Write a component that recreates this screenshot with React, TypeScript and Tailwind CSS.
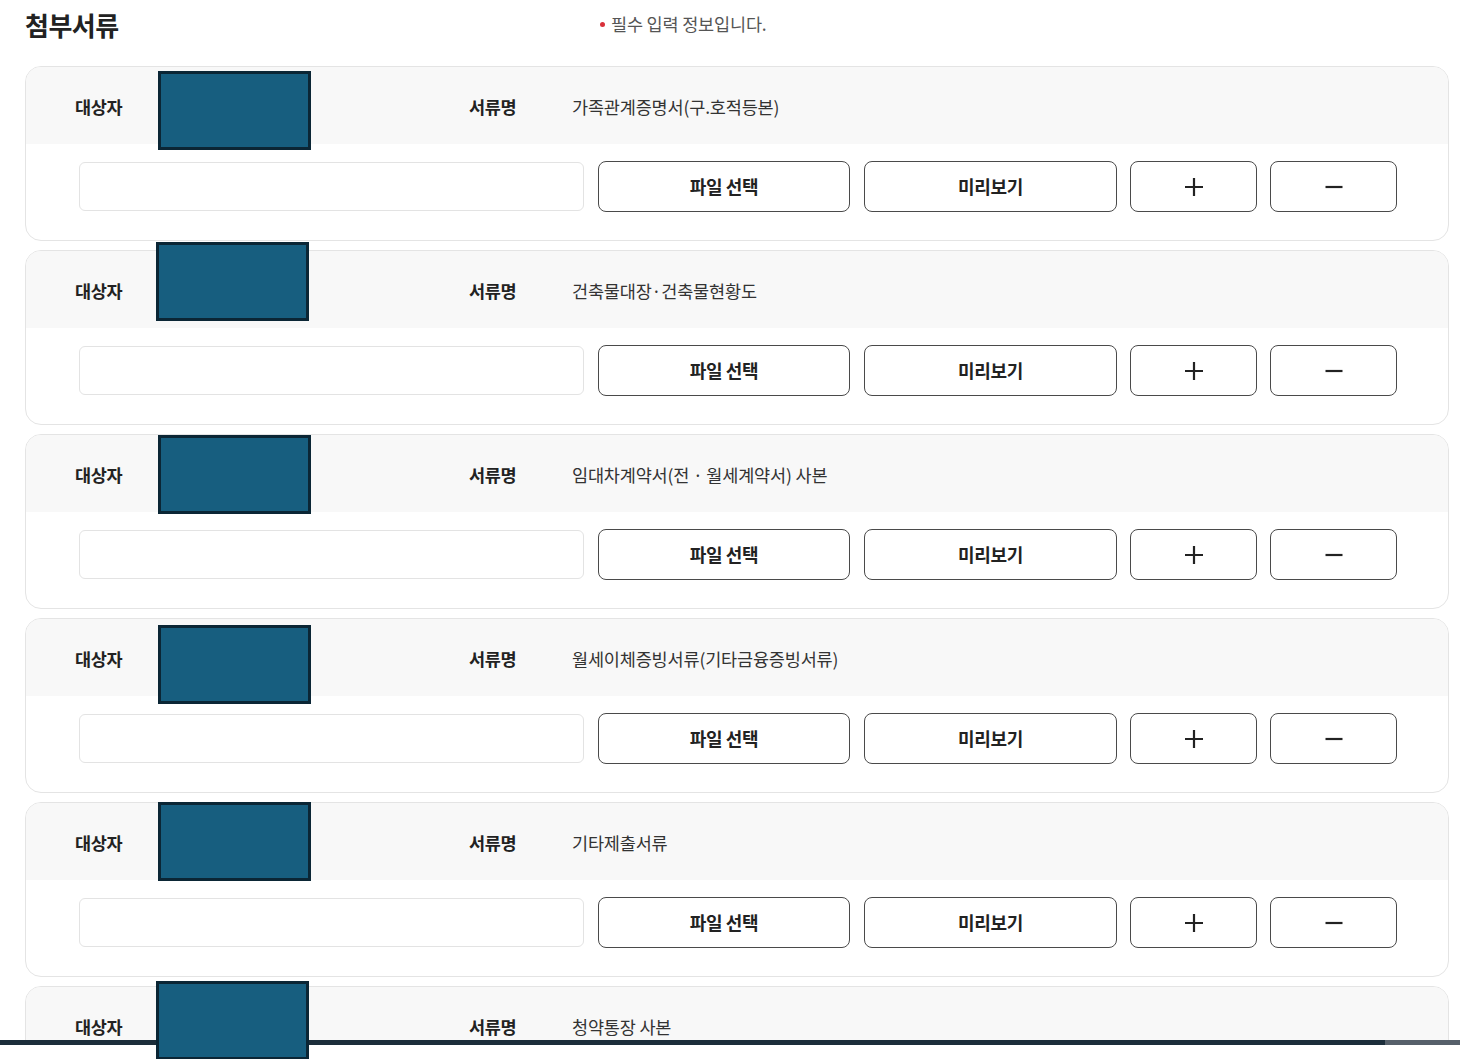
import React from "react";

type Doc = { name: string; box: { top: number; left: number }; cut?: boolean };

const docs: Doc[] = [
  { name: "가족관계증명서(구.호적등본)", box: { top: 4, left: 132 } },
  { name: "건축물대장·건축물현황도", box: { top: -9, left: 130 } },
  { name: "임대차계약서(전 · 월세계약서) 사본", box: { top: 0, left: 132 } },
  { name: "월세이체증빙서류(기타금융증빙서류)", box: { top: 6, left: 132 } },
  { name: "기타제출서류", box: { top: -1, left: 132 } },
  { name: "청약통장 사본", box: { top: -6, left: 130 }, cut: true },
];

function PlusIcon() {
  return (
    <svg width="20" height="20" viewBox="0 0 20 20">
      <path d="M10 1v18M1 10h18" stroke="#222" strokeWidth="2.2" />
    </svg>
  );
}

function MinusIcon() {
  return (
    <svg width="20" height="20" viewBox="0 0 20 20">
      <path d="M1.5 10h17" stroke="#222" strokeWidth="2.2" />
    </svg>
  );
}

function DocCard({ doc }: { doc: Doc }) {
  const btn =
    "h-[51px] rounded-[8px] border-[1.5px] border-[#4a4a4a] bg-white flex items-center justify-center text-[18px] font-bold text-[#222] tracking-[-0.02em]";
  return (
    <div className="relative rounded-[16px] border border-[#e4e4e4] bg-white">
      {/* 가림 박스 */}
      <div
        className="absolute z-20 w-[153px] h-[79px] bg-[#175e7f] border-[3px] border-[#0b2635]"
        style={{ top: doc.box.top, left: doc.box.left }}
      />
      <div className="h-[77px] rounded-t-[15px] bg-[#f8f8f8] flex items-center pl-[49px] pt-[3px] text-[17.5px]">
        <span className="w-[394px] font-bold text-[#222] tracking-[-0.02em]">대상자</span>
        <span className="w-[103px] font-bold text-[#222] tracking-[-0.02em]">서류명</span>
        <span className="text-[#333] tracking-[-0.01em]">{doc.name}</span>
      </div>
      {doc.cut ? (
        <div className="h-[96px]" />
      ) : (
        <div className="flex items-center pl-[53px] pr-[51px] pt-[17px] pb-[28px]">
          <div className="flex-1 h-[49px] rounded-[6px] border border-[#e3e3e3] bg-white" />
          <button className={`${btn} w-[252px] ml-[14px]`}>파일 선택</button>
          <button className={`${btn} w-[253px] ml-[14px]`}>미리보기</button>
          <button className={`${btn} w-[127px] ml-[13px]`}>
            <PlusIcon />
          </button>
          <button className={`${btn} w-[127px] ml-[13px]`}>
            <MinusIcon />
          </button>
        </div>
      )}
    </div>
  );
}

export default function App() {
  return (
    <div
      className="relative h-[1059px] overflow-hidden bg-white"
      style={{ fontFamily: '"Noto Sans CJK KR", "Noto Sans", sans-serif' }}
    >
      <div className="pl-[25px] pr-[17px]">
        <div className="h-[48px] flex items-center">
          <h2 className="w-[575px] text-[26px] font-bold text-[#222] tracking-[-0.02em]">첨부서류</h2>
          <p className="flex items-center gap-[6px] text-[17.5px] text-[#555] tracking-[-0.01em] pt-[1px]">
            <span className="w-[5px] h-[5px] rounded-full bg-[#d9303a]" />
            필수 입력 정보입니다.
          </p>
        </div>
        <div className="mt-[18px] flex flex-col gap-[9px]">
          {docs.map((d, i) => (
            <DocCard key={i} doc={d} />
          ))}
        </div>
      </div>
      {/* 하단 잘림 */}
      <div className="absolute z-10 left-0 right-0 top-[1040px] h-[19px] bg-white">
        <div className="flex h-[5px]">
          <div className="flex-1 bg-[#1c2e3b]" />
          <div className="w-[75px] bg-[#56606a]" />
          <div className="w-[6px] bg-white" />
        </div>
      </div>
    </div>
  );
}
